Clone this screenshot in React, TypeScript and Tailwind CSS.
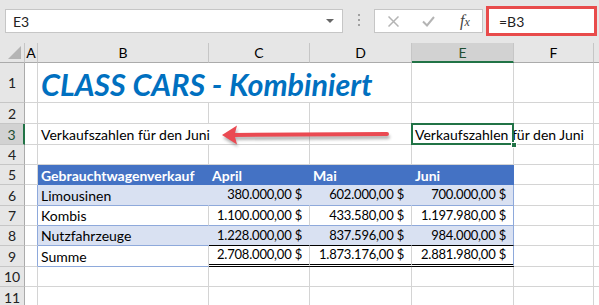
import type { ReactNode } from "react";

const font = { fontFamily: "Lato, 'Open Sans', sans-serif" };

function Hd({ w, label, active }: { w: string; label: string; active?: boolean }) {
  return (
    <div
      className={`${w} flex h-full shrink-0 items-center justify-center border-r border-[#c6c6c6] text-[14px] ${
        active ? "border-b-2 border-b-[#217346] bg-[#d2d2d2] text-[#1e4e32]" : "border-b border-b-[#ababab] text-black"
      }`}
    >
      {label}
    </div>
  );
}

function RowNum({ n, active }: { n: number; active?: boolean }) {
  return (
    <div
      className={`flex h-full w-[25px] shrink-0 items-center justify-center border-b border-[#c6c6c6] text-[14px] ${
        active ? "border-r-2 border-r-[#217346] bg-[#d2d2d2] text-[#1e4e32]" : "border-r border-r-[#ababab] bg-[#e6e6e6] text-[#222]"
      }`}
    >
      {n}
    </div>
  );
}

function C({ w, className, children }: { w: string; className?: string; children?: ReactNode }) {
  return (
    <div className={`${w} relative flex h-full shrink-0 items-center whitespace-nowrap ${className ?? "border-b border-r border-[#d4d4d4]"}`}>
      {children}
    </div>
  );
}

function Row({ n, h, active, children }: { n: number; h: string; active?: boolean; children: ReactNode }) {
  return (
    <div className={`flex ${h}`}>
      <RowNum n={n} active={active} />
      {children}
      <div className="h-full flex-1 border-b border-[#d4d4d4]" />
    </div>
  );
}

function Blank({ n, h }: { n: number; h: string }) {
  return (
    <Row n={n} h={h}>
      <C w="w-[13px]" />
      <C w="w-[171px]" />
      <C w="w-[101px]" />
      <C w="w-[102px]" />
      <C w="w-[102px]" />
      <C w="w-[80px]" />
    </Row>
  );
}

const num = "justify-end pr-[7px] text-[13px] tracking-[-0.2px]";

function DataRow({
  n,
  h,
  label,
  vals,
  shaded,
  last,
  beforeSum,
}: {
  n: number;
  h: string;
  label: string;
  vals: string[];
  shaded?: boolean;
  last?: boolean;
  beforeSum?: boolean;
}) {
  const fill = shaded ? "bg-[#d9e1f2] border-r border-r-[#d9e1f2]" : "border-r border-r-[#d4d4d4]";
  const bottom = last
    ? "border-b-[3px] border-double border-b-black"
    : beforeSum
      ? "border-b border-b-black"
      : "border-b border-b-[#8ea9db]";
  return (
    <Row n={n} h={h}>
      <C w="w-[13px]" className="border-b border-r border-b-[#d4d4d4] border-r-[#8ea9db]" />
      <C w="w-[171px]" className={`${fill} border-b border-b-[#8ea9db] pl-[3px]`}>
        {label}
      </C>
      <C w="w-[101px]" className={`${fill} ${bottom} ${num}`}>
        {vals[0]}
      </C>
      <C w="w-[102px]" className={`${fill} ${bottom} ${num}`}>
        {vals[1]}
      </C>
      <C
        w="w-[102px]"
        className={`${shaded ? "bg-[#d9e1f2]" : ""} border-r border-r-[#8ea9db] ${bottom} ${num}`}
      >
        {vals[2]}
      </C>
      <C w="w-[80px]" />
    </Row>
  );
}

function Arrow() {
  return (
    <svg className="pointer-events-none absolute left-[215px] top-[121px] z-20" width="180" height="30" viewBox="0 0 180 30">
      <defs>
        <filter id="sh" x="-10%" y="-50%" width="120%" height="200%">
          <feGaussianBlur stdDeviation="1.6" />
        </filter>
      </defs>
      <g transform="translate(1 3)" opacity="0.45" filter="url(#sh)" fill="#555" stroke="#555">
        <line x1="18" y1="14" x2="172" y2="13" strokeWidth="4" strokeLinecap="round" />
        <path d="M7 14 L22 5 L19 14 L22 23 Z" strokeWidth="0" />
      </g>
      <line x1="18" y1="14" x2="172" y2="13" stroke="#ea4a52" strokeWidth="4" strokeLinecap="round" />
      <path d="M7 14 L22 4.5 L19.5 14 L22 23.5 Z" fill="#ea4a52" />
    </svg>
  );
}

export default function App() {
  return (
    <div className="relative h-[305px] w-[599px] overflow-hidden bg-white text-[14px] text-black" style={font}>
      {/* formula bar */}
      <div className="flex h-[43px] items-start bg-[#e6e6e6] pl-[5px] pt-[6px]">
        <div className="mt-[3px] flex h-[24px] w-[338px] items-center border border-[#c6c6c6] bg-white pl-[7px] text-[14px] text-[#222]">
          <span className="flex-1">E3</span>
          <span className="mr-[8px] h-0 w-0 border-x-[4px] border-t-[4px] border-x-transparent border-t-[#666]" />
        </div>
        <div className="ml-[15px] mr-[14px] mt-[8px] flex flex-col gap-[3px]">
          <span className="h-[2px] w-[2px] bg-[#a0a0a0]" />
          <span className="h-[2px] w-[2px] bg-[#a0a0a0]" />
          <span className="h-[2px] w-[2px] bg-[#a0a0a0]" />
        </div>
        <div className="mt-[3px] flex h-[24px] w-[109px] items-center border border-[#c6c6c6] bg-white pl-[13px]">
          <svg width="11" height="11" viewBox="0 0 11 11">
            <path d="M0.5 0.5 L10.5 10.5 M10.5 0.5 L0.5 10.5" stroke="#b4b4b4" strokeWidth="1.5" />
          </svg>
          <svg className="ml-[23px]" width="13" height="11" viewBox="0 0 13 11">
            <path d="M1 5.5 L5 9.5 L12 1" stroke="#b4b4b4" strokeWidth="2" fill="none" />
          </svg>
          <span
            className="ml-[25px] text-[16px] leading-none italic text-[#444]"
            style={{ fontFamily: "'Liberation Serif', serif" }}
          >
            f<span className="text-[12px]">x</span>
          </span>
        </div>
        <div className="ml-[3px] flex h-[30px] w-[111px] items-center border-[3px] border-[#e84b4b] bg-white pl-[10px] text-[14px] text-[#222]">
          =B3
        </div>
      </div>

      {/* column headers */}
      <div className="flex h-[20px] bg-[#e6e6e6]">
        <div className="relative h-full w-[25px] shrink-0 border-b border-r border-b-[#ababab] border-r-[#c6c6c6]">
          <span className="absolute bottom-[3px] right-[3px] h-0 w-0 border-b-[13px] border-l-[13px] border-b-[#b4b4b4] border-l-transparent" />
        </div>
        <Hd w="w-[13px]" label="A" />
        <Hd w="w-[171px]" label="B" />
        <Hd w="w-[101px]" label="C" />
        <Hd w="w-[102px]" label="D" />
        <Hd w="w-[102px]" label="E" active />
        <Hd w="w-[80px]" label="F" />
        <div className="h-full flex-1 border-b border-[#ababab]" />
      </div>

      {/* row 1 */}
      <Row n={1} h="h-[40px]">
        <C w="w-[13px]" />
        <C w="w-[171px]" className="border-b border-[#d4d4d4]">
          <span className="absolute left-[3px] top-[6px] z-10 whitespace-nowrap text-[30.5px] leading-none font-bold italic text-[#0070c0]">
            CLASS CARS - Kombiniert
          </span>
        </C>
        <C w="w-[101px]" className="border-b border-[#d4d4d4]" />
        <C w="w-[102px]" />
        <C w="w-[102px]" />
        <C w="w-[80px]" />
      </Row>
      <Blank n={2} h="h-[21px]" />
      {/* row 3 */}
      <Row n={3} h="h-[21px]" active>
        <C w="w-[13px]" />
        <C w="w-[171px]" className="border-b border-[#d4d4d4] pl-[3px]">
          <span>Verkaufszahlen für den Juni</span>
        </C>
        <C w="w-[101px]" />
        <C w="w-[102px]" />
        <C w="w-[102px]" className="border-b border-b-[#d4d4d4]">
          <span className="absolute left-[3px] z-10">Verkaufszahlen für den Juni</span>
          <span className="absolute -left-[1px] right-0 -top-[1px] bottom-[-1px] z-20 border-2 border-[#217346]" />
          <span className="absolute -bottom-[4px] -right-[3px] z-30 h-[6px] w-[6px] border border-white bg-[#217346]" />
        </C>
        <C w="w-[80px]" />
      </Row>
      <Blank n={4} h="h-[20px]" />
      {/* row 5 header */}
      <Row n={5} h="h-[20px]">
        <C w="w-[13px]" />
        <C w="w-[171px]" className="bg-[#4472c4] pl-[3px] font-bold text-white">
          Gebrauchtwagenverkauf
        </C>
        <C w="w-[101px]" className="bg-[#4472c4] pl-[3px] font-bold text-white">
          April
        </C>
        <C w="w-[102px]" className="bg-[#4472c4] pl-[3px] font-bold text-white">
          Mai
        </C>
        <C w="w-[102px]" className="bg-[#4472c4] pl-[3px] font-bold text-white">
          Juni
        </C>
        <C w="w-[80px]" />
      </Row>
      <DataRow n={6} h="h-[21px]" label="Limousinen" vals={["380.000,00 $", "602.000,00 $", "700.000,00 $"]} shaded />
      <DataRow n={7} h="h-[20px]" label="Kombis" vals={["1.100.000,00 $", "433.580,00 $", "1.197.980,00 $"]} />
      <DataRow n={8} h="h-[20px]" label="Nutzfahrzeuge" vals={["1.228.000,00 $", "837.596,00 $", "984.000,00 $"]} shaded beforeSum />
      <DataRow n={9} h="h-[21px]" label="Summe" vals={["2.708.000,00 $", "1.873.176,00 $", "2.881.980,00 $"]} last />
      <Blank n={10} h="h-[20px]" />
      <Blank n={11} h="h-[21px]" />

      <Arrow />
    </div>
  );
}
